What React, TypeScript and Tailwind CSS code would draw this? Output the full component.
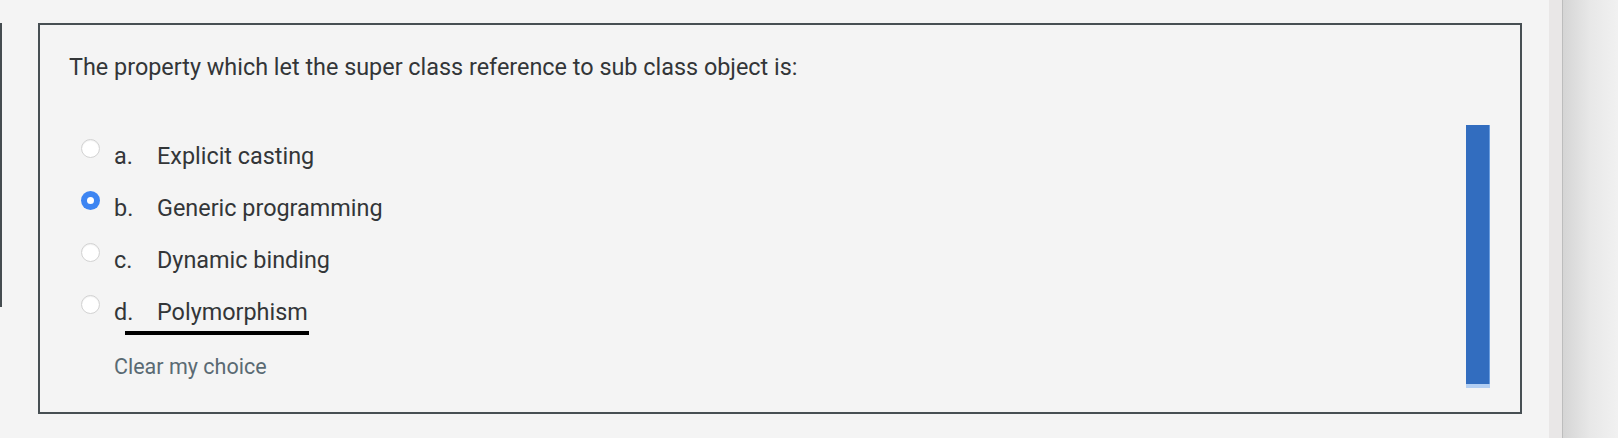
import React from "react";

const options = [
  { l: "a.", t: "Explicit casting", sel: false },
  { l: "b.", t: "Generic programming", sel: true },
  { l: "c.", t: "Dynamic binding", sel: false },
  { l: "d.", t: "Polymorphism", sel: false },
];

function Radio({ sel }: { sel: boolean }) {
  if (sel) {
    return (
      <div className="mt-[9px] w-[19px] h-[19px] rounded-full bg-[#3d85f2] flex items-center justify-center shrink-0">
        <div className="w-[7px] h-[7px] rounded-full bg-white" />
      </div>
    );
  }
  return (
    <div className="mt-[9px] w-[19px] h-[19px] rounded-full bg-white border border-[#d2d2d2] shadow-[inset_0_1px_1px_rgba(0,0,0,0.06)] shrink-0" />
  );
}

export default function App() {
  return (
    <div
      className="w-[1618px] h-[438px] bg-[#f4f4f4] flex overflow-hidden"
      style={{ fontFamily: "Roboto, 'Noto Sans', sans-serif" }}
    >
      <div className="w-[2px] mt-[23px] h-[284px] bg-[#454c50] shrink-0" />
      <div className="ml-[36px] mt-[23px] w-[1484px] h-[391px] border-2 border-[#474f53] flex shrink-0">
        <div className="flex-1 flex flex-col">
          <div className="pl-[29px] pt-[26px] text-[23.4px] leading-[32px] text-[#333638]">
            The property which let the super class reference to sub class object is:
          </div>
          <div className="mt-[47px] pl-[41px] flex flex-col">
            {options.map((o, i) => (
              <div key={o.l} className="relative flex items-start h-[52px]">
                <Radio sel={o.sel} />
                <span className="ml-[14px] w-[43px] text-[23.4px] leading-[52px] text-[#333638]">{o.l}</span>
                <span className="text-[23.4px] leading-[52px] text-[#333638]">{o.t}</span>
                {i === 3 && (
                  <div className="absolute left-[44px] top-[45px] w-[184px] h-[4px] bg-black" />
                )}
              </div>
            ))}
          </div>
          <div className="mt-[14px] pl-[74px] text-[21.5px] leading-[30px] text-[#5a6a73]">
            Clear my choice
          </div>
        </div>
        <div className="self-start mt-[100px] mr-[30px] w-[24px] flex flex-col">
          <div className="h-[259px] bg-[#326dbf] border-r border-[#6b9ee0]" />
          <div className="h-[4px] bg-[#b3cff3]" />
        </div>
      </div>
      <div className="ml-[27px] w-[13px] h-full bg-[#e9e7e7] shrink-0" />
      <div className="w-[1px] h-full bg-[#bdbdbd] shrink-0" />
      <div className="flex-1 h-full bg-gradient-to-r from-[#d5d5d5] via-[#e8e8e8] to-[#f1f1f1]" />
    </div>
  );
}
